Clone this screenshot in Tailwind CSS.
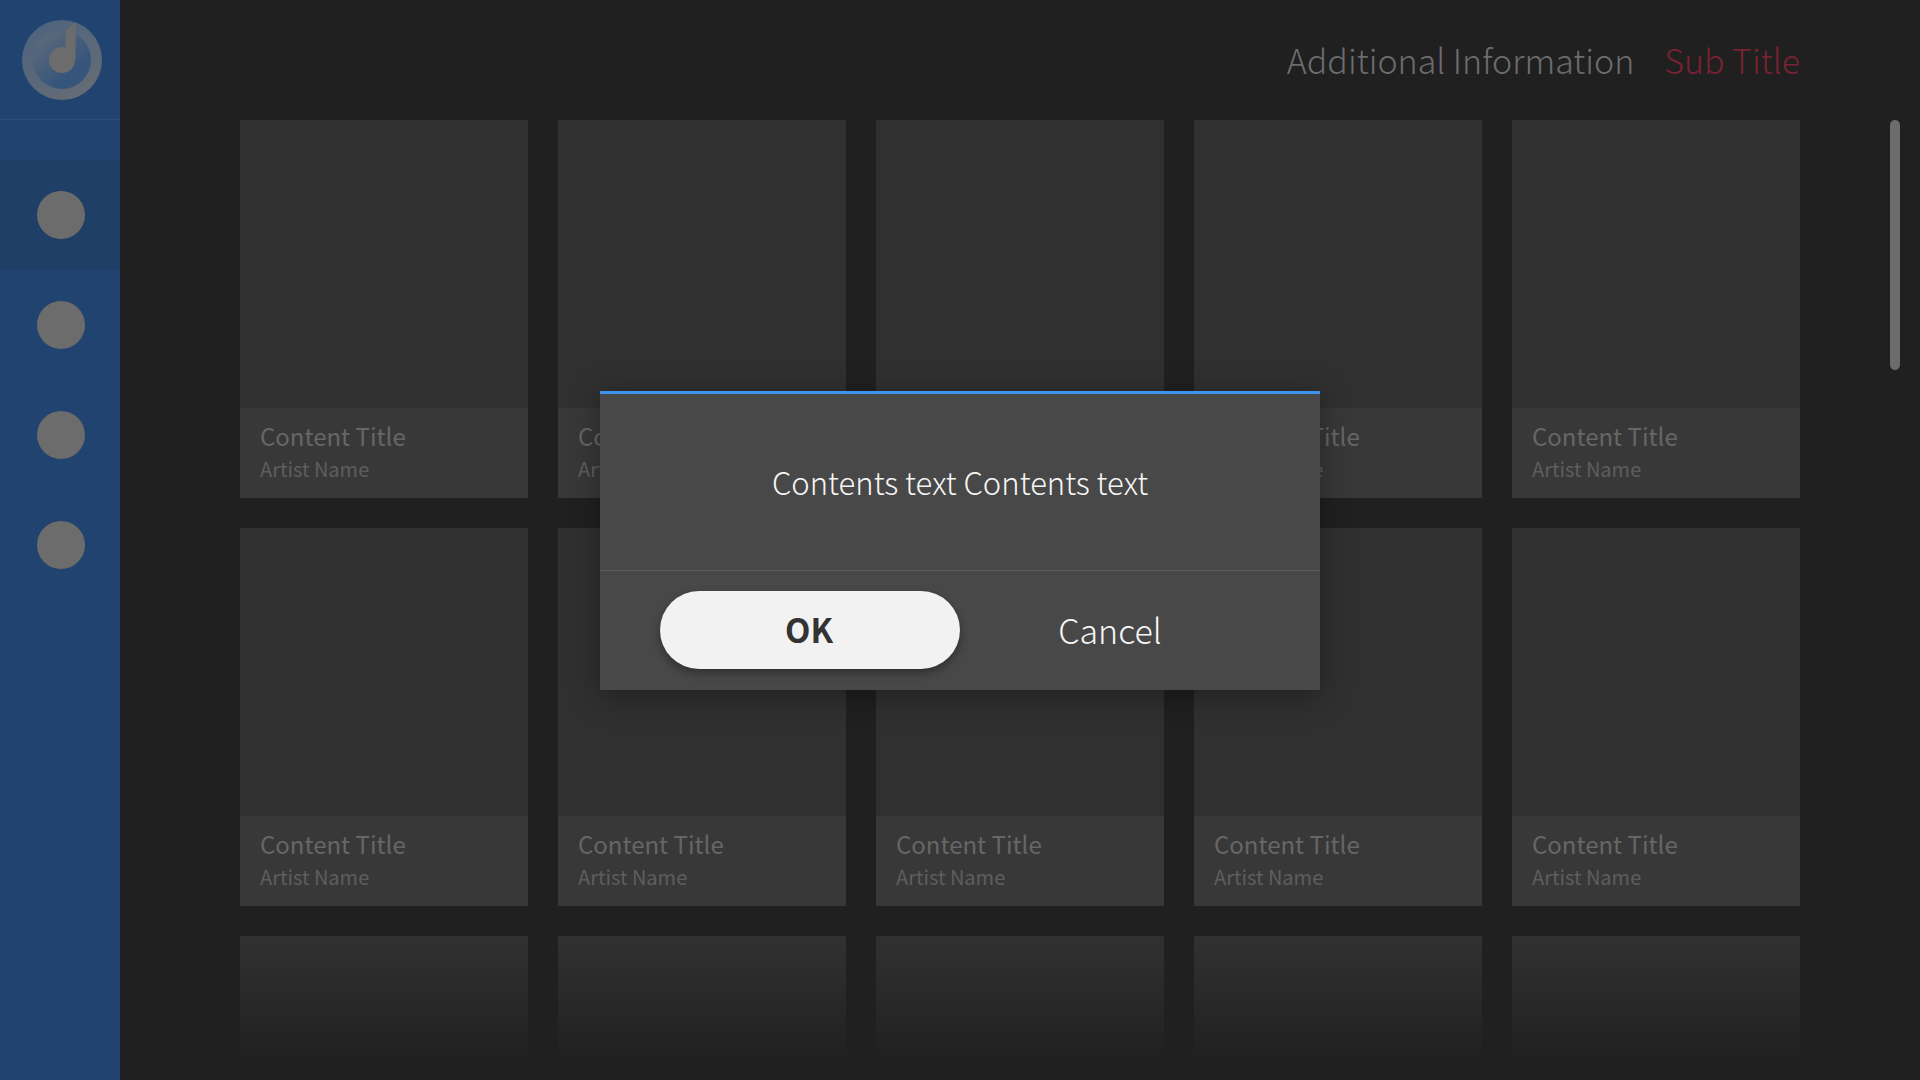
<!DOCTYPE html>
<html lang="en">
<head>
    <meta charset="UTF-8">
    <title>Content List</title>
    <script src="https://cdn.jsdelivr.net/npm/@tailwindcss/browser@4"></script>
</head>
<body class="bg-[#202020] font-['Noto_Sans_CJK_KR','Noto_Sans',sans-serif]">
<div class="relative flex w-[1920px] h-[1080px] overflow-hidden">

    <!-- Sidebar -->
    <aside class="w-[120px] shrink-0 bg-[#21436f]">
        <div class="flex items-center justify-center h-[120px] border-b border-[#2c4d76]">
            <svg width="120" height="119" viewBox="0 0 120 119">
                <defs>
                    <linearGradient id="ring" x1="0.1" y1="0" x2="0.8" y2="1">
                        <stop offset="0" stop-color="#4d637f"/>
                        <stop offset="1" stop-color="#666c74"/>
                    </linearGradient>
                    <linearGradient id="disc" x1="0.1" y1="0.1" x2="0.75" y2="0.85">
                        <stop offset="0" stop-color="#5d6a7a"/>
                        <stop offset="0.85" stop-color="#36557b"/>
                    </linearGradient>
                </defs>
                <circle cx="62" cy="60" r="40" fill="url(#ring)"/>
                <circle cx="62" cy="60" r="29" fill="url(#disc)"/>
                <circle cx="62" cy="60" r="13" fill="#6c6c6c"/>
                <path d="M65.5 31 L75.5 22 L75.5 60 L65.5 60 Z" fill="#6c6c6c"/>
            </svg>
        </div>
        <nav class="mt-[40px] pl-[2px]">
            <div class="flex items-center justify-center h-[110px] -ml-[2px] pl-[2px] bg-[#1f3f66]"><span class="size-[48px] rounded-full bg-[#6c6c6c]"></span></div>
            <div class="flex items-center justify-center h-[110px]"><span class="size-[48px] rounded-full bg-[#6c6c6c]"></span></div>
            <div class="flex items-center justify-center h-[110px]"><span class="size-[48px] rounded-full bg-[#6c6c6c]"></span></div>
            <div class="flex items-center justify-center h-[110px]"><span class="size-[48px] rounded-full bg-[#6c6c6c]"></span></div>
        </nav>
    </aside>

    <!-- Main Content -->
    <main class="relative flex-1 pl-[120px] pr-[120px]">
        <header class="flex justify-end items-center gap-[30px] h-[120px] text-[34px] leading-[1] font-light">
            <span class="text-[#6c6c6c]">Additional Information</span>
            <span class="text-[#7a2232]">Sub Title</span>
        </header>

        <section class="grid grid-cols-[repeat(5,288px)] gap-[30px]">
            <!-- Row 1 -->
            <article class="bg-[#303030]"><div class="h-[288px]"></div><div class="h-[90px] bg-[#383838] pl-[20px] pt-[12px]"><p class="text-[24px] leading-[32px] text-[#666666]">Content Title</p><p class="mt-[2px] text-[20px] leading-[30px] text-[#5e5e5e]">Artist Name</p></div></article>
            <article class="bg-[#303030]"><div class="h-[288px]"></div><div class="h-[90px] bg-[#383838] pl-[20px] pt-[12px]"><p class="text-[24px] leading-[32px] text-[#666666]">Content Title</p><p class="mt-[2px] text-[20px] leading-[30px] text-[#5e5e5e]">Artist Name</p></div></article>
            <article class="bg-[#303030]"><div class="h-[288px]"></div><div class="h-[90px] bg-[#383838] pl-[20px] pt-[12px]"><p class="text-[24px] leading-[32px] text-[#666666]">Content Title</p><p class="mt-[2px] text-[20px] leading-[30px] text-[#5e5e5e]">Artist Name</p></div></article>
            <article class="bg-[#303030]"><div class="h-[288px]"></div><div class="h-[90px] bg-[#383838] pl-[20px] pt-[12px]"><p class="text-[24px] leading-[32px] text-[#666666]">Content Title</p><p class="mt-[2px] text-[20px] leading-[30px] text-[#5e5e5e]">Artist Name</p></div></article>
            <article class="bg-[#303030]"><div class="h-[288px]"></div><div class="h-[90px] bg-[#383838] pl-[20px] pt-[12px]"><p class="text-[24px] leading-[32px] text-[#666666]">Content Title</p><p class="mt-[2px] text-[20px] leading-[30px] text-[#5e5e5e]">Artist Name</p></div></article>
            <!-- Row 2 -->
            <article class="bg-[#303030]"><div class="h-[288px]"></div><div class="h-[90px] bg-[#383838] pl-[20px] pt-[12px]"><p class="text-[24px] leading-[32px] text-[#666666]">Content Title</p><p class="mt-[2px] text-[20px] leading-[30px] text-[#5e5e5e]">Artist Name</p></div></article>
            <article class="bg-[#303030]"><div class="h-[288px]"></div><div class="h-[90px] bg-[#383838] pl-[20px] pt-[12px]"><p class="text-[24px] leading-[32px] text-[#666666]">Content Title</p><p class="mt-[2px] text-[20px] leading-[30px] text-[#5e5e5e]">Artist Name</p></div></article>
            <article class="bg-[#303030]"><div class="h-[288px]"></div><div class="h-[90px] bg-[#383838] pl-[20px] pt-[12px]"><p class="text-[24px] leading-[32px] text-[#666666]">Content Title</p><p class="mt-[2px] text-[20px] leading-[30px] text-[#5e5e5e]">Artist Name</p></div></article>
            <article class="bg-[#303030]"><div class="h-[288px]"></div><div class="h-[90px] bg-[#383838] pl-[20px] pt-[12px]"><p class="text-[24px] leading-[32px] text-[#666666]">Content Title</p><p class="mt-[2px] text-[20px] leading-[30px] text-[#5e5e5e]">Artist Name</p></div></article>
            <article class="bg-[#303030]"><div class="h-[288px]"></div><div class="h-[90px] bg-[#383838] pl-[20px] pt-[12px]"><p class="text-[24px] leading-[32px] text-[#666666]">Content Title</p><p class="mt-[2px] text-[20px] leading-[30px] text-[#5e5e5e]">Artist Name</p></div></article>
            <!-- Row 3, cut off by the fade -->
            <article class="h-[288px] bg-[#303030]"></article>
            <article class="h-[288px] bg-[#303030]"></article>
            <article class="h-[288px] bg-[#303030]"></article>
            <article class="h-[288px] bg-[#303030]"></article>
            <article class="h-[288px] bg-[#303030]"></article>
        </section>

        <!-- Bottom fade -->
        <div class="absolute inset-x-0 bottom-0 h-[135px] bg-linear-to-b from-[#202020]/0 to-[#202020] to-85%"></div>

        <!-- Scrollbar -->
        <div class="absolute left-[1770px] top-[120px] w-[10px] h-[250px] rounded-full bg-[#6c6c6c]"></div>
    </main>

    <!-- Dialog -->
    <div class="absolute left-[600px] top-[391px] w-[720px] h-[299px] bg-[#484848] border-t-3 border-[#3f93f0] shadow-[0_6px_30px_rgba(0,0,0,0.35)]">
        <p class="flex items-center justify-center h-[177px] border-b border-[#5c5c5c] text-[31px] font-light text-[#f6f6f6]">Contents text Contents text</p>
        <div class="flex items-start px-[60px] pt-[20px]">
            <button class="w-[300px] h-[78px] pr-[2px] rounded-full bg-[#f2f2f2] text-[33px] font-bold text-[#333333] shadow-[0_4px_10px_rgba(0,0,0,0.35)]">OK</button>
            <button class="w-[300px] h-[78px] pb-[2px] text-[34px] font-light text-[#f6f6f6]">Cancel</button>
        </div>
    </div>
</div>
</body>
</html>
